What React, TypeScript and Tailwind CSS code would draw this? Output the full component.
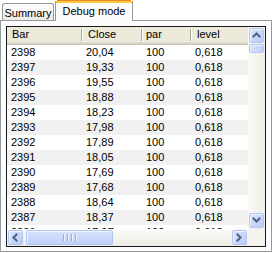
import React from "react";

const rows: [string, string][] = [
  ["2398", "20,04"],
  ["2397", "19,33"],
  ["2396", "19,55"],
  ["2395", "18,88"],
  ["2394", "18,23"],
  ["2393", "17,98"],
  ["2392", "17,89"],
  ["2391", "18,05"],
  ["2390", "17,69"],
  ["2389", "17,68"],
  ["2388", "18,64"],
  ["2387", "18,37"],
  ["2386", "17,97"],
];

function Chevron({ dir }: { dir: "up" | "down" | "left" | "right" }) {
  const d = {
    up: "M1.5 5.5 L4.5 2.5 L7.5 5.5",
    down: "M1.5 2.5 L4.5 5.5 L7.5 2.5",
    left: "M5.5 1.5 L2.5 4.5 L5.5 7.5",
    right: "M2.5 1.5 L5.5 4.5 L2.5 7.5",
  }[dir];
  return (
    <svg width="9" height="9" viewBox="0 0 9 9">
      <path d={d} fill="none" stroke="#4d6185" strokeWidth="2" strokeLinecap="square" />
    </svg>
  );
}

function Btn({ dir }: { dir: "up" | "down" | "left" | "right" }) {
  return (
    <div className="w-[17px] h-[17px] p-px shrink-0">
      <div className="w-full h-full rounded-[2px] border border-[#b1c4f2] bg-gradient-to-br from-[#dbe5fd] to-[#b8cbf6] shadow-[inset_1px_1px_0_#eef3fe] flex items-center justify-center">
        <Chevron dir={dir} />
      </div>
    </div>
  );
}

function VScroll() {
  return (
    <div className="w-[17px] h-[202px] flex flex-col bg-gradient-to-r from-[#fbfbf8] to-[#eeede5] shrink-0">
      <Btn dir="up" />
      <div className="h-[9px] px-px py-0">
        <div className="w-full h-full rounded-[2px] border border-[#b1c4f2] bg-gradient-to-r from-[#d6e2fd] to-[#bfd0f9] shadow-[inset_1px_1px_0_#eef3fe]" />
      </div>
      <div className="flex-1" />
      <Btn dir="down" />
    </div>
  );
}

function HScroll() {
  return (
    <div className="w-[241px] h-[17px] flex bg-gradient-to-b from-[#fbfbf8] to-[#eeede5] shrink-0">
      <Btn dir="left" />
      <div className="w-[89px] h-full py-px pl-[2px]">
        <div className="w-full h-full rounded-[2px] border border-[#b1c4f2] bg-gradient-to-b from-[#d6e2fd] to-[#bfd0f9] shadow-[inset_1px_1px_0_#eef3fe] flex items-center justify-center gap-px">
          <div className="w-px h-[7px] bg-[#8eaaf0] shadow-[1px_0_0_#eef3fe]" />
          <div className="w-px h-[7px] bg-transparent" />
          <div className="w-px h-[7px] bg-[#8eaaf0] shadow-[1px_0_0_#eef3fe]" />
          <div className="w-px h-[7px] bg-transparent" />
          <div className="w-px h-[7px] bg-[#8eaaf0] shadow-[1px_0_0_#eef3fe]" />
          <div className="w-px h-[7px] bg-transparent" />
          <div className="w-px h-[7px] bg-[#8eaaf0] shadow-[1px_0_0_#eef3fe]" />
        </div>
      </div>
      <div className="flex-1" />
      <Btn dir="right" />
    </div>
  );
}

function Divider() {
  return <div className="w-[2px] h-[12px] border-l border-[#aca899] bg-white shrink-0" />;
}

export default function App() {
  return (
    <div className="w-[273px] h-[253px] bg-white font-['Liberation_Sans',Arial,sans-serif] text-[11px] leading-none text-black">
      <div className="flex items-end h-[20px] pl-[2px]">
        <div className="w-[52px] h-[17px] border border-b-0 border-[#919b9c] rounded-t-[3px] bg-gradient-to-b from-white to-[#ecebe5] flex items-center justify-center pt-[2px]">
          Summary
        </div>
        <div className="relative z-10 -mb-px ml-px w-[78px] h-[21px] flex flex-col">
          <div className="h-px mx-[2px] bg-[#e68b2c]" />
          <div className="h-[2px] bg-[#ffc83c] border-x border-[#e68b2c]" />
          <div className="flex-1 border-x border-[#919b9c] bg-[#fcfcfe] flex items-start justify-center pt-[3px]">
            Debug mode
          </div>
        </div>
      </div>
      <div className="w-[272px] h-[232px] border border-[#919b9c] bg-[#fcfcfe] pt-[5px] px-[5px]">
        <div className="w-[260px] h-[221px] border border-[#1a1a1a] bg-white flex flex-col">
          <div className="flex h-[202px]">
            <div className="w-[241px] h-[202px] flex flex-col overflow-hidden">
              <div className="h-[18px] shrink-0 flex flex-col bg-[#ebeadb]">
                <div className="h-[15px] flex items-center">
                  <div className="w-[76px] flex items-center justify-between pl-[5px]">
                    <span>Bar</span>
                    <Divider />
                  </div>
                  <div className="w-[60px] flex items-center justify-between pl-[5px]">
                    <span>Close</span>
                    <Divider />
                  </div>
                  <div className="w-[49px] flex items-center justify-between pl-[3px]">
                    <span>par</span>
                    <Divider />
                  </div>
                  <div className="flex-1 pl-[5px]">level</div>
                </div>
                <div className="h-px bg-[#e2decd]" />
                <div className="h-px bg-[#d6d2c2]" />
                <div className="h-px bg-[#cbc7b8]" />
              </div>
              {rows.map(([bar, close], i) => (
                <div
                  key={bar}
                  className={`h-[15px] shrink-0 flex items-center ${i % 2 === 0 ? "bg-white" : "bg-[#f1f1f1]"}`}
                >
                  <div className="w-[76px] pl-[4px]">{bar}</div>
                  <div className="w-[60px] pl-[3px]">{close}</div>
                  <div className="w-[49px] pl-[3px]">100</div>
                  <div className="flex-1 pl-[3px]">0,618</div>
                </div>
              ))}
            </div>
            <VScroll />
          </div>
          <div className="flex h-[17px]">
            <HScroll />
            <div className="w-[17px] h-[17px] bg-[#f4f3ee]" />
          </div>
        </div>
      </div>
    </div>
  );
}
